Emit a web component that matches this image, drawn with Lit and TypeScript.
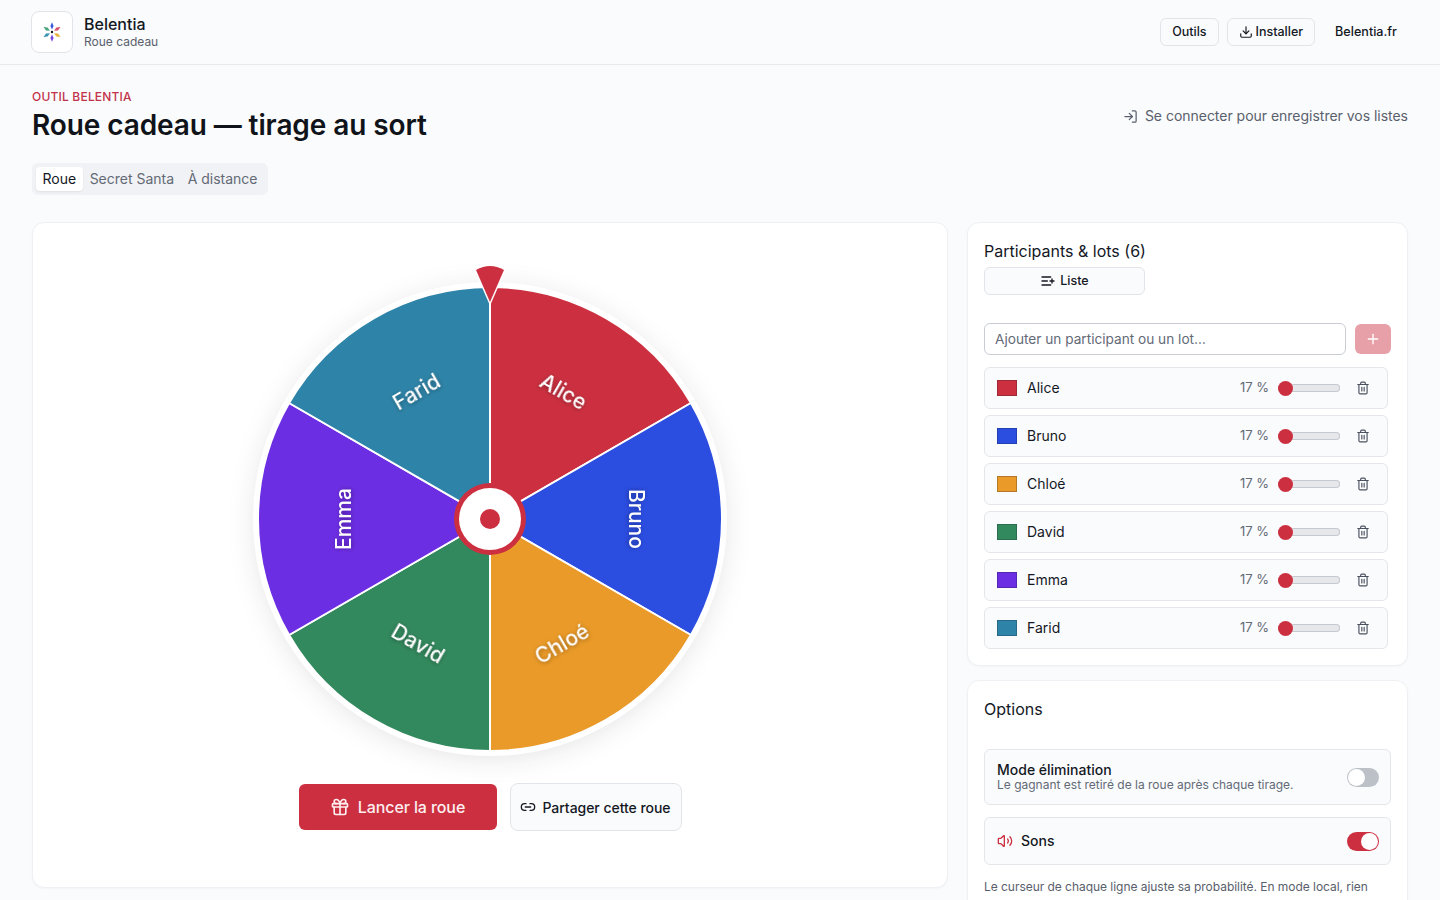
import { LitElement, html, css, svg, unsafeCSS } from "lit";
import { customElement } from "lit/decorators.js";

const RED = "#cc3040";
const red = unsafeCSS(RED);

type Entry = { name: string; color: string };

const entries: Entry[] = [
  { name: "Alice", color: "#cc3040" },
  { name: "Bruno", color: "#2b4de0" },
  { name: "Chloé", color: "#ea9a28" },
  { name: "David", color: "#33895e" },
  { name: "Emma", color: "#6c2ee2" },
  { name: "Farid", color: "#2e84a8" },
];

const CX = 250;
const CY = 260;
const R = 232;

function point(deg: number, r: number) {
  const a = ((deg - 90) * Math.PI) / 180;
  return [CX + r * Math.cos(a), CY + r * Math.sin(a)];
}

// labels stay readable: flip the ones that would end up upside down
function labelAngle(mid: number) {
  if (mid <= 90) return mid;
  if (mid <= 210) return mid - 180;
  return mid - 360;
}

function icon(paths: string[], size = 16) {
  return html`<svg
    class="icon"
    width=${size}
    height=${size}
    viewBox="0 0 24 24"
    fill="none"
    stroke="currentColor"
    stroke-width="2"
    stroke-linecap="round"
    stroke-linejoin="round"
  >
    ${paths.map((d) => svg`<path d=${d}></path>`)}
  </svg>`;
}

const icons = {
  download: ["M12 15V3", "M21 15v4a2 2 0 0 1-2 2H5a2 2 0 0 1-2-2v-4", "m7 10 5 5 5-5"],
  login: ["m10 17 5-5-5-5", "M15 12H3", "M15 3h4a2 2 0 0 1 2 2v14a2 2 0 0 1-2 2h-4"],
  listPlus: ["M11 12H3", "M16 6H3", "M16 18H3", "M18 9v6", "M21 12h-6"],
  plus: ["M5 12h14", "M12 5v14"],
  trash: [
    "M10 11v6",
    "M14 11v6",
    "M19 6v14a2 2 0 0 1-2 2H7a2 2 0 0 1-2-2V6",
    "M3 6h18",
    "M8 6V4a2 2 0 0 1 2-2h4a2 2 0 0 1 2 2v2",
  ],
  gift: [
    "M4 8h16a1 1 0 0 1 1 1v2a1 1 0 0 1-1 1H4a1 1 0 0 1-1-1V9a1 1 0 0 1 1-1z",
    "M12 8v13",
    "M19 12v7a2 2 0 0 1-2 2H7a2 2 0 0 1-2-2v-7",
    "M7.5 8a2.5 2.5 0 0 1 0-5A4.8 8 0 0 1 12 8a4.8 8 0 0 1 4.5-5 2.5 2.5 0 0 1 0 5",
  ],
  link: ["M9 17H7A5 5 0 0 1 7 7h2", "M15 7h2a5 5 0 1 1 0 10h-2", "M8 12h8"],
  volume: [
    "M11 4.702a.705.705 0 0 0-1.203-.498L6.413 7.587A1.4 1.4 0 0 1 5.416 8H3a1 1 0 0 0-1 1v6a1 1 0 0 0 1 1h2.416a1.4 1.4 0 0 1 .997.413l3.383 3.384A.705.705 0 0 0 11 19.298z",
    "M16 9a5 5 0 0 1 0 6",
    "M19.364 18.364a9 9 0 0 0 0-12.728",
  ],
};

@customElement("app-root")
export class AppRoot extends LitElement {
  static styles = css`
    :host {
      display: block;
      height: 100vh;
      overflow: hidden;
      background: #fafbfd;
      color: #14181f;
      font-family: Inter, "Liberation Sans", sans-serif;
      font-size: 14px;
    }

    * {
      box-sizing: border-box;
    }

    .icon {
      display: block;
      flex: none;
    }

    button {
      font: inherit;
      color: inherit;
    }

    /* nudges text up 1px against the icon or control next to it */
    .lift {
      margin-bottom: 2px;
    }

    .topbar {
      display: flex;
      align-items: center;
      justify-content: space-between;
      height: 65px;
      padding: 0 32px 1px 31px;
      border-bottom: 1px solid #e8eaee;
    }

    .brand {
      display: flex;
      align-items: center;
      gap: 11px;
    }

    .logo {
      display: flex;
      align-items: center;
      justify-content: center;
      width: 42px;
      height: 42px;
      background: #fff;
      border: 1px solid #e1e4e9;
      border-radius: 8px;
    }

    .brand-name {
      font-size: 16px;
      font-weight: 500;
      line-height: 20px;
    }

    .brand-sub {
      font-size: 12px;
      line-height: 16px;
      color: #59606c;
    }

    .topnav {
      display: flex;
      align-items: center;
      gap: 8px;
    }

    .nav-btn {
      display: flex;
      align-items: center;
      gap: 3px;
      height: 28px;
      padding: 0 11px;
      font-size: 12.5px;
      font-weight: 500;
      background: #fafbfd;
      border: 1px solid #e1e4e9;
      border-radius: 6px;
    }

    .nav-link {
      padding: 0 11px 0 12px;
      font-size: 12.6px;
      font-weight: 500;
    }

    main {
      padding: 24px 32px 0;
    }

    .head {
      display: flex;
      align-items: flex-start;
      justify-content: space-between;
    }

    .eyebrow {
      margin-bottom: 1px;
      font-size: 12px;
      line-height: 16px;
      font-weight: 500;
      letter-spacing: 0.2px;
      color: #c2334a;
      text-transform: uppercase;
    }

    h1 {
      margin: 0;
      font-size: 28px;
      line-height: 38px;
      font-weight: 600;
      letter-spacing: -0.1px;
      color: #10141a;
    }

    .signin {
      display: flex;
      align-items: center;
      gap: 7px;
      margin-top: 17px;
      letter-spacing: -0.02px;
      color: #59606c;
      line-height: 20px;
    }

    .tabs {
      display: inline-flex;
      align-items: center;
      gap: 0.5px;
      height: 32px;
      margin-top: 19px;
      padding: 4px;
      background: #f1f2f5;
      border-radius: 6px;
    }

    .tab {
      padding: 0 6.5px;
      height: 24px;
      line-height: 24px;
      color: #636a76;
    }

    .tab.active {
      color: #14181f;
      background: #fff;
      border-radius: 4px;
      box-shadow: 0 1px 2px rgba(20, 24, 31, 0.08);
    }

    .layout {
      display: grid;
      grid-template-columns: 916px 441px;
      gap: 19px;
      align-items: start;
      margin-top: 27px;
    }

    .card {
      background: #fff;
      border: 1px solid #eef0f3;
      border-radius: 12px;
      box-shadow: 0 1px 2px rgba(20, 24, 31, 0.03);
    }

    .wheel-card {
      display: flex;
      flex-direction: column;
      align-items: center;
      height: 666px;
      padding-top: 36px;
    }

    .wheel {
      display: block;
      overflow: visible;
    }

    .wheel text {
      font-family: Inter, "Liberation Sans", sans-serif;
      font-size: 21px;
      font-weight: 500;
      fill: #fff;
      text-anchor: middle;
      dominant-baseline: central;
      filter: drop-shadow(0 1px 2px rgba(0, 0, 0, 0.35));
    }

    .rim {
      filter: drop-shadow(0 4px 12px rgba(20, 24, 31, 0.1));
    }

    .actions {
      display: flex;
      align-items: center;
      gap: 13px;
      margin-top: 4px;
    }

    .spin {
      display: flex;
      align-items: center;
      justify-content: center;
      gap: 8px;
      width: 198px;
      height: 46px;
      font-size: 16px;
      font-weight: 450;
      letter-spacing: -0.1px;
      color: #fdeef0;
      background: ${red};
      border: 0;
      border-radius: 6px;
    }

    .share {
      display: flex;
      align-items: center;
      justify-content: center;
      gap: 6px;
      width: 172px;
      height: 48px;
      font-weight: 450;
      letter-spacing: -0.04px;
      background: #fafbfd;
      border: 1px solid #e1e4e9;
      border-radius: 8px;
    }

    .side {
      display: flex;
      flex-direction: column;
      gap: 14px;
    }

    .panel {
      padding: 16px;
    }

    h2 {
      margin: 0;
      font-size: 16px;
      line-height: 24px;
      font-weight: 400;
    }

    .list-head {
      display: flex;
      flex-direction: column;
      width: 161px;
      white-space: nowrap;
    }

    .list-btn {
      display: flex;
      align-items: center;
      justify-content: center;
      gap: 4px;
      height: 28px;
      margin-top: 4px;
      font-size: 12.5px;
      font-weight: 500;
      background: #fafbfd;
      border: 1px solid #e1e4e9;
      border-radius: 6px;
    }

    .add {
      display: flex;
      align-items: center;
      justify-content: space-between;
      margin-top: 28px;
    }

    .add input {
      width: 362px;
      height: 32px;
      padding: 0 10px;
      font: inherit;
      font-size: 13.65px;
      color: inherit;
      background: #fff;
      border: 1px solid #c9cdd3;
      border-radius: 6px;
      outline: none;
    }

    .add input::placeholder {
      color: #636a76;
      opacity: 1;
    }

    .add-btn {
      display: flex;
      align-items: center;
      justify-content: center;
      width: 36px;
      height: 30px;
      color: #fff;
      background: #e8a0a8;
      border: 0;
      border-radius: 6px;
    }

    .rows {
      display: flex;
      flex-direction: column;
      gap: 6px;
      margin-top: 12px;
      padding-right: 3px;
    }

    .row {
      display: flex;
      align-items: center;
      height: 42px;
      padding: 0 17px 0 12px;
      background: #fafbfd;
      border: 1px solid #e4e6ea;
      border-radius: 6px;
    }

    .swatch {
      flex: none;
      width: 20px;
      height: 16px;
      border: 1px solid rgba(20, 24, 31, 0.25);
    }

    .name {
      flex: 1;
      margin-left: 10px;
    }

    .pct {
      font-size: 13px;
      color: #636a76;
    }

    .row input[type="range"] {
      -webkit-appearance: none;
      appearance: none;
      flex: none;
      width: 62px;
      height: 15px;
      margin: 0 0 0 9px;
      background: transparent;
    }

    .row input[type="range"]::-webkit-slider-runnable-track {
      height: 8px;
      background: #e5e7eb;
      box-shadow: inset 0 0 0 1px #c5c9d0;
      border-radius: 4px;
    }

    .row input[type="range"]::-webkit-slider-thumb {
      -webkit-appearance: none;
      width: 15px;
      height: 15px;
      margin-top: -3.5px;
      background: ${red};
      border-radius: 50%;
    }

    .trash {
      margin-left: 16px;
      color: #4c5360;
    }

    .opt-list {
      display: flex;
      flex-direction: column;
      gap: 12px;
      margin-top: 28px;
    }

    .opt {
      display: flex;
      align-items: center;
      justify-content: space-between;
      padding: 0 11px 0 12px;
      background: #fafbfd;
      border: 1px solid #e4e6ea;
      border-radius: 6px;
    }

    .opt-tall {
      height: 56px;
    }

    .opt-short {
      height: 48px;
    }

    .opt-title {
      margin-bottom: 2px;
      font-weight: 450;
      line-height: 13px;
    }

    .opt-desc {
      font-size: 12px;
      line-height: 14px;
      color: #636a76;
    }

    .opt-label {
      display: flex;
      align-items: center;
      gap: 8px;
      font-weight: 450;
    }

    .opt-label .icon {
      color: ${red};
    }

    .toggle {
      position: relative;
      flex: none;
      width: 32px;
      height: 19px;
      padding: 0;
      background: #bcc1c8;
      border: 0;
      border-radius: 10px;
    }

    .toggle::after {
      content: "";
      position: absolute;
      top: 1px;
      left: 1px;
      width: 17px;
      height: 17px;
      background: #fff;
      border-radius: 50%;
    }

    .toggle.on {
      background: ${red};
    }

    .toggle.on::after {
      left: 14px;
    }

    .note {
      margin: 14px 0 0;
      font-size: 12px;
      line-height: 16px;
      letter-spacing: -0.04px;
      color: #59606c;
    }
  `;

  private renderLogo() {
    const petals = [
      { a: 0, c: "#3b5bdb" },
      { a: 60, c: "#d9506a" },
      { a: 120, c: "#e8b23c" },
      { a: 180, c: "#7a45e0" },
      { a: 240, c: "#3c93b5" },
      { a: 300, c: "#4aa37a" },
    ];
    return html`<svg width="22" height="22" viewBox="0 0 22 22">
      ${petals.map(
        (p) => svg`<path
          d="M11 1.2 L12.6 5 L11 8.6 L9.4 5 Z"
          fill=${p.c}
          transform="rotate(${p.a} 11 11)"
        ></path>`
      )}
      <circle cx="11" cy="11" r="1.2" fill="#14181f"></circle>
    </svg>`;
  }

  private renderWheel() {
    const step = 360 / entries.length;
    return html`<svg class="wheel" width="500" height="520" viewBox="0 0 500 520">
      <circle class="rim" cx=${CX} cy=${CY} r="237" fill="#fff"></circle>
      ${entries.map((e, i) => {
        const [x1, y1] = point(i * step, R);
        const [x2, y2] = point((i + 1) * step, R);
        return svg`<path
          d="M${CX} ${CY} L${x1} ${y1} A${R} ${R} 0 0 1 ${x2} ${y2} Z"
          fill=${e.color}
          stroke="#fff"
          stroke-width="2"
        ></path>`;
      })}
      ${entries.map((e, i) => {
        const mid = i * step + step / 2;
        const [x, y] = point(mid, 145);
        return svg`<text x=${x} y=${y} dy="-1.5" transform="rotate(${labelAngle(mid)} ${x} ${y})">${e.name}</text>`;
      })}
      <circle cx=${CX} cy=${CY} r="36" fill=${RED}></circle>
      <circle cx=${CX} cy=${CY} r="31" fill="#fff"></circle>
      <circle cx=${CX} cy=${CY} r="10" fill=${RED}></circle>
      <path
        d="M250 43 L236 11 Q250 3 264 11 Z"
        fill=${RED}
        stroke="#fff"
        stroke-width="3"
        paint-order="stroke"
      ></path>
    </svg>`;
  }

  render() {
    return html`
      <header class="topbar">
        <div class="brand">
          <div class="logo">${this.renderLogo()}</div>
          <div>
            <div class="brand-name">Belentia</div>
            <div class="brand-sub">Roue cadeau</div>
          </div>
        </div>
        <nav class="topnav">
          <button class="nav-btn">Outils</button>
          <button class="nav-btn">${icon(icons.download, 14)} Installer</button>
          <span class="nav-link">Belentia.fr</span>
        </nav>
      </header>

      <main>
        <div class="head">
          <div>
            <div class="eyebrow">Outil Belentia</div>
            <h1>Roue cadeau — tirage au sort</h1>
          </div>
          <div class="signin">${icon(icons.login, 15)} Se connecter pour enregistrer vos listes</div>
        </div>

        <div class="tabs">
          <span class="tab active">Roue</span>
          <span class="tab">Secret Santa</span>
          <span class="tab">À distance</span>
        </div>

        <div class="layout">
          <section class="card wheel-card">
            ${this.renderWheel()}
            <div class="actions">
              <button class="spin">${icon(icons.gift, 20)} Lancer la roue</button>
              <button class="share">${icon(icons.link, 16)} Partager cette roue</button>
            </div>
          </section>

          <div class="side">
            <section class="card panel">
              <div class="list-head">
                <h2>Participants &amp; lots (${entries.length})</h2>
                <button class="list-btn">${icon(icons.listPlus, 16)} <span class="lift">Liste</span></button>
              </div>
              <div class="add">
                <input placeholder="Ajouter un participant ou un lot…" />
                <button class="add-btn">${icon(icons.plus, 16)}</button>
              </div>
              <div class="rows">
                ${entries.map(
                  (e) => html`<div class="row">
                    <span class="swatch" style="background:${e.color}"></span>
                    <span class="name lift">${e.name}</span>
                    <span class="pct lift">17 %</span>
                    <input type="range" min="1" max="100" value="1" />
                    <span class="trash">${icon(icons.trash, 14)}</span>
                  </div>`
                )}
              </div>
            </section>

            <section class="card panel">
              <h2>Options</h2>
              <div class="opt-list">
                <div class="opt opt-tall">
                  <div>
                    <div class="opt-title">Mode élimination</div>
                    <div class="opt-desc">Le gagnant est retiré de la roue après chaque tirage.</div>
                  </div>
                  <button class="toggle"></button>
                </div>
                <div class="opt opt-short">
                  <div class="opt-label">${icon(icons.volume, 16)} <span class="lift">Sons</span></div>
                  <button class="toggle on"></button>
                </div>
              </div>
              <p class="note">Le curseur de chaque ligne ajuste sa probabilité. En mode local, rien</p>
            </section>
          </div>
        </div>
      </main>
    `;
  }
}
